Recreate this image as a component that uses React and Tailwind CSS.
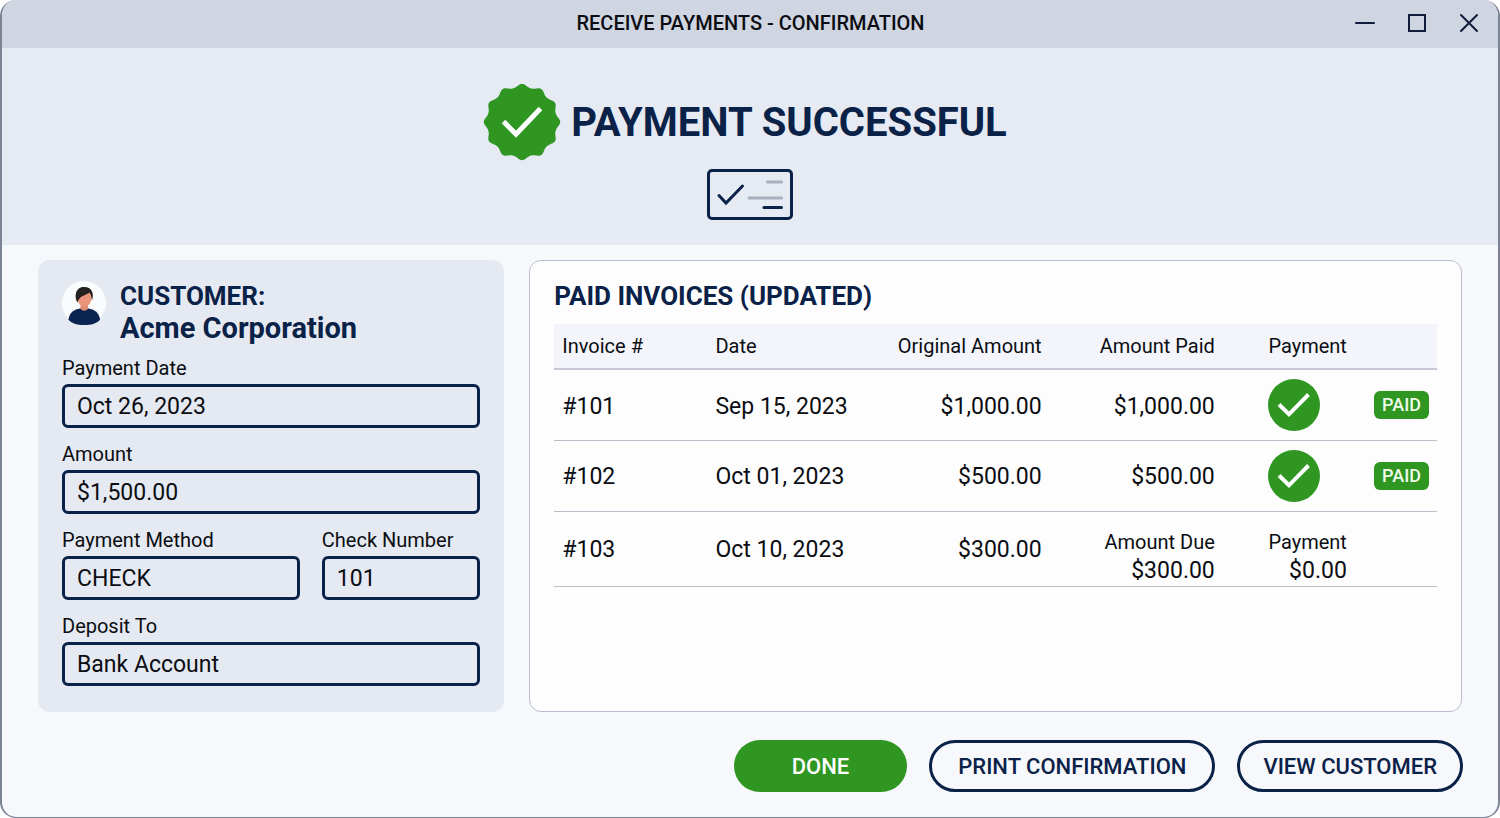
import { useId } from 'react';

const invoices = [
    { id: '#101', date: 'Sep 15, 2023', original: '$1,000.00', paid: '$1,000.00', settled: true },
    { id: '#102', date: 'Oct 01, 2023', original: '$500.00', paid: '$500.00', settled: true },
    { id: '#103', date: 'Oct 10, 2023', original: '$300.00', due: '$300.00', payment: '$0.00', settled: false },
];

// Wavy outline with twelve bumps
const sealPoints = Array.from({ length: 240 }, (_, i) => {
    const a = (i / 240) * Math.PI * 2;
    const r = 34.8 + 3.4 * ((1 + Math.cos(a * 12)) / 2) ** 1.3;
    return `${(39 + r * Math.sin(a)).toFixed(2)},${(38 - r * Math.cos(a)).toFixed(2)}`;
}).join(' ');

function Seal() {
    return (
        <svg width="78" height="78" viewBox="0 0 78 78" fill="none" aria-hidden="true">
            <polygon points={sealPoints} fill="#2e9621" />
            <path d="M20.5 37.5 33 50.2 57.5 24.5" stroke="#fff" strokeWidth="5" />
        </svg>
    );
}

function CheckIcon() {
    return (
        <svg width="86" height="52" viewBox="0 0 86 52" fill="none" strokeLinecap="round" strokeWidth="3" aria-hidden="true">
            <rect x="1.5" y="1.5" width="83" height="48" rx="3.5" stroke="#0a2148" />
            <path d="M12 26.500 19 34 35.500 17" stroke="#0a2148" />
            <path d="M60.500 13H74.500M42 29H74.500" stroke="#a9afbf" />
            <path d="M57 38.500H74.500" stroke="#0a2148" />
        </svg>
    );
}

function Avatar() {
    return (
        <svg className="mt-px shrink-0" width="44" height="44" viewBox="0 0 44 44" aria-hidden="true">
            <circle cx="22" cy="22" r="22" fill="#fafbfd" />
            <path d="M6.500 38.500C7.500 31 12.500 28.500 18 27.500H26.500C32 28.500 37 31 38 38.500C33 46 11.500 46 6.500 38.500Z" fill="#0b2350" />
            <path d="M18.500 22H26V27.500C24.500 30.500 20 30.500 18.500 27.500Z" fill="#dd8c72" />
            <path d="M15 14C15 20 17.500 25.500 22.500 25.500S30 20 30 14L27 9H17Z" fill="#e8957b" />
            <path d="M15.500 21.500C12.500 17 12.500 6 22 6C31 6 32 14 30 19.500C29.500 16 29 13.500 27.500 11.500C24 14.500 17 14.500 15.500 21.500Z" fill="#23211f" />
        </svg>
    );
}

function RoundCheck() {
    return (
        <svg width="52" height="52" viewBox="0 0 52 52" fill="none" role="img" aria-label="Payment applied">
            <circle cx="26" cy="26" r="26" fill="#2e9621" />
            <path d="M11 25.500 21 35.300 40.500 15.500" stroke="#fff" strokeWidth="4" />
        </svg>
    );
}

function Field({ label, value, className = '' }) {
    const id = useId();
    return (
        <div className={className}>
            <label htmlFor={id} className="block text-[20px] leading-6">{label}</label>
            <input
                id={id}
                type="text"
                defaultValue={value}
                className="mt-1 block h-11 w-full rounded-md border-3 border-[#0a2148] px-3 text-[23px]"
            />
        </div>
    );
}

const windowButtons = [
    { label: 'Minimize', d: 'M1 10H19' },
    { label: 'Maximize', d: 'M2 2H18V18H2Z' },
    { label: 'Close', d: 'M2 2 18 18M18 2 2 18' },
];

export default function App() {
    return (
        <div className="flex min-h-screen flex-col overflow-hidden rounded-2xl border-x-2 border-b border-[#7b8395] bg-[#f6f8fc] font-[Roboto,sans-serif] text-[#0b0d12]">
            {/* Title bar */}
            <header className="grid h-12 shrink-0 grid-cols-[1fr_auto_1fr] items-center bg-[#cfd5e1] pr-[19px] pb-0.5 pl-5">
                <h1 className="col-start-2 text-[20px] font-medium">RECEIVE PAYMENTS - CONFIRMATION</h1>
                <div className="flex justify-end gap-8">
                    {windowButtons.map(({ label, d }) => (
                        <button key={label} type="button" aria-label={label}>
                            <svg width="20" height="20" viewBox="0 0 20 20" fill="none" stroke="#111c3a" strokeWidth="2" strokeLinecap="round">
                                <path d={d} />
                            </svg>
                        </button>
                    ))}
                </div>
            </header>

            {/* Confirmation banner */}
            <section className="flex flex-col items-center bg-[#e6eaf2] pt-9 pb-6">
                <div className="flex items-center gap-2.5 pr-2.5">
                    <Seal />
                    <h2 className="text-[40px] font-bold text-[#0a2148]">PAYMENT SUCCESSFUL</h2>
                </div>
                <div className="mt-[7px]">
                    <CheckIcon />
                </div>
            </section>

            <main className="grid grid-cols-[1fr_2fr] gap-[25px] px-9 pt-[15px]">
                {/* Customer details */}
                <section className="rounded-xl bg-[#e5e9f1] px-6 pt-5 pb-[26px]">
                    <div className="flex gap-3.5">
                        <Avatar />
                        <h3 className="text-[26px] leading-8 font-bold text-[#0a2148]">
                            CUSTOMER:
                            <span className="block text-[29px] leading-8">Acme Corporation</span>
                        </h3>
                    </div>
                    <div className="mt-3 grid grid-cols-[3fr_2fr] gap-x-[22px] gap-y-3.5">
                        <Field label="Payment Date" value="Oct 26, 2023" className="col-span-2" />
                        <Field label="Amount" value="$1,500.00" className="col-span-2" />
                        <Field label="Payment Method" value="CHECK" />
                        <Field label="Check Number" value="101" />
                        <Field label="Deposit To" value="Bank Account" className="col-span-2" />
                    </div>
                </section>

                {/* Paid invoices */}
                <section className="rounded-xl border border-[#b9bfcc] bg-[#fdfdfe] px-6 pt-[19px]">
                    <h3 className="text-[26px] leading-8 font-bold text-[#0a2148]">PAID INVOICES (UPDATED)</h3>
                    <table className="mt-3 w-full table-fixed text-left text-[23px]">
                        <thead>
                            <tr className="h-[45px] border-b-2 border-[#c3c8d2] bg-[#f4f5fa] text-[20px]">
                                <th className="w-[153px] px-2 font-normal">Invoice #</th>
                                <th className="w-[160px] px-2 font-normal">Date</th>
                                <th className="w-[182px] px-2 text-right font-normal">Original Amount</th>
                                <th className="w-[173px] px-2 text-right font-normal">Amount Paid</th>
                                <th className="w-[132px] pr-2 text-right font-normal">Payment</th>
                                <th className="w-[82px]" aria-label="Status" />
                            </tr>
                        </thead>
                        <tbody>
                            {invoices.map((inv) => (
                                <tr key={inv.id} className="h-[71px] border-b border-[#b9bec8]">
                                    <td className="px-2 pt-1">{inv.id}</td>
                                    <td className="px-2 pt-1">{inv.date}</td>
                                    <td className="px-2 pt-1 text-right">{inv.original}</td>
                                    {inv.settled ? (
                                        <>
                                            <td className="px-2 pt-1 text-right">{inv.paid}</td>
                                            <td className="pl-[45px]"><RoundCheck /></td>
                                            <td className="pr-2">
                                                <span className="ml-auto block w-fit rounded-md bg-[#2e9621] px-2 text-[18px] leading-7 font-medium text-[#eefbe9]">PAID</span>
                                            </td>
                                        </>
                                    ) : (
                                        <>
                                            <td className="px-2 pt-4 text-right">
                                                <div className="text-[20px] leading-7">Amount Due</div>
                                                <div className="leading-[30px]">{inv.due}</div>
                                            </td>
                                            <td className="pt-4 pr-2 text-right">
                                                <div className="text-[20px] leading-7">Payment</div>
                                                <div className="leading-[30px]">{inv.payment}</div>
                                            </td>
                                            <td />
                                        </>
                                    )}
                                </tr>
                            ))}
                        </tbody>
                    </table>
                </section>
            </main>

            <footer className="flex justify-end gap-[22px] pt-7 pr-[35px] pb-6 pl-9 text-[22px] font-medium">
                <button type="button" className="h-[52px] rounded-full bg-[#2e9621] px-[58px] text-white">DONE</button>
                <button type="button" className="h-[52px] rounded-full border-3 border-[#0a2148] px-[26px] text-[#0a2148]">PRINT CONFIRMATION</button>
                <button type="button" className="h-[52px] rounded-full border-3 border-[#0a2148] px-[23px] text-[#0a2148]">VIEW CUSTOMER</button>
            </footer>
        </div>
    );
}
